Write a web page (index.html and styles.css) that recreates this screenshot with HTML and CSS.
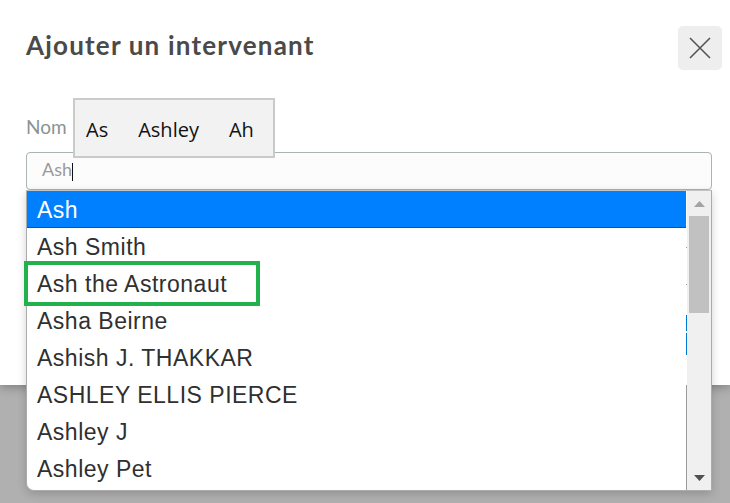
FILE: index.html
```html
<!DOCTYPE html>
<html lang="fr">
<head>
<meta charset="utf-8">
<title>Ajouter un intervenant</title>
<link rel="stylesheet" href="styles.css">
</head>
<body>
<div class="modal">
  <div class="header">
    <h2 class="title">Ajouter un intervenant</h2>
    <button class="close" aria-label="Fermer">
      <svg width="22" height="22" viewBox="0 0 22 22"><path d="M1 1 L21 21 M21 1 L1 21" stroke="#555" stroke-width="1.6" fill="none"/></svg>
    </button>
  </div>
  <div class="form">
    <label class="label">Nom</label>
    <div class="field">
      <div class="input"><span class="value">Ash</span><span class="caret"></span></div>
      <div class="ime">
        <span class="cand">As</span>
        <span class="cand">Ashley</span>
        <span class="cand">Ah</span>
      </div>
      <div class="dropdown">
        <ul class="list">
          <li class="item selected">Ash</li>
          <li class="item">Ash Smith</li>
          <li class="item">Ash the Astronaut</li>
          <li class="item">Asha Beirne</li>
          <li class="item">Ashish J. THAKKAR</li>
          <li class="item">ASHLEY ELLIS PIERCE</li>
          <li class="item">Ashley J</li>
          <li class="item">Ashley Pet</li>
        </ul>
        <div class="gap"></div>
        <div class="scrollbar">
          <div class="sb-btn sb-up"><svg width="11" height="6" viewBox="0 0 11 6"><polygon points="0,6 5.5,0 11,6" fill="#a3a3a3"/></svg></div>
          <div class="thumb"></div>
          <div class="sb-track"></div>
          <div class="sb-btn sb-down"><svg width="11" height="6" viewBox="0 0 11 6"><polygon points="0,0 11,0 5.5,6" fill="#505050"/></svg></div>
        </div>
      </div>
      <div class="highlight"></div>
    </div>
  </div>
</div>
</body>
</html>
```

FILE: styles.css
```css
html, body {
  margin: 0;
  padding: 0;
}
body {
  width: 730px;
  height: 503px;
  overflow: hidden;
  background: #b0b0b0;
}
.modal {
  background: #fff;
  height: 385px;
  box-sizing: border-box;
  box-shadow: 0 2px 10px rgba(0, 0, 0, 0.3);
  position: relative;
}
.header {
  display: flex;
  justify-content: space-between;
  align-items: flex-start;
  padding: 26px 8px 0 26px;
}
.title {
  margin: 4px 0 0 0;
  font-family: Lato, "Liberation Sans", sans-serif;
  font-weight: 700;
  font-size: 26px;
  letter-spacing: 1.2px;
  line-height: 30px;
  color: #4a4a4a;
}
.close {
  width: 44px;
  height: 44px;
  border: none;
  border-radius: 5px;
  background: #eeeeee;
  display: flex;
  align-items: center;
  justify-content: center;
  padding: 0;
}
.form {
  padding: 0 18px 0 26px;
}
.label {
  display: block;
  margin-top: 45px;
  font-family: Lato, "Liberation Sans", sans-serif;
  font-size: 19px;
  line-height: 23px;
  color: #879494;
}
.field {
  position: relative;
  margin-top: 14px;
}
.input {
  height: 38px;
  box-sizing: border-box;
  border: 1px solid #aab4b4;
  border-radius: 4px;
  background: #fcfcfc;
  padding: 0 15px 4px;
  font-family: Lato, "Liberation Sans", sans-serif;
  font-size: 18px;
  line-height: 32px;
  color: #9a9a9a;
}
.caret {
  display: inline-block;
  width: 1px;
  height: 18px;
  background: #111;
  vertical-align: -5px;
}
.ime {
  position: absolute;
  left: 47px;
  top: -54px;
  width: 202px;
  height: 60px;
  box-sizing: border-box;
  border: 2px solid #cacaca;
  background: #f2f2f2;
  display: flex;
  align-items: center;
  gap: 30px;
  padding: 3px 0 0 11px;
  font-family: "Open Sans", "Noto Sans", sans-serif;
  font-size: 20px;
  color: #111;
}
.dropdown {
  position: absolute;
  left: 0;
  top: 38px;
  width: 686px;
  height: 301px;
  box-sizing: border-box;
  border: 1px solid #ababab;
  border-top-color: #c4c4c4;
  border-radius: 0 0 0 8px;
  display: flex;
  box-shadow: 0 3px 10px rgba(0, 0, 0, 0.18);
  overflow: hidden;
}
.list {
  list-style: none;
  margin: 0;
  padding: 0;
  width: 659px;
  background: #fff;
  overflow: hidden;
}
.item {
  height: 36px;
  padding-top: 1px;
  line-height: 37px;
  padding-left: 10px;
  font-family: "Liberation Sans", Arial, sans-serif;
  font-size: 23px;
  letter-spacing: 0.5px;
  color: #303030;
  white-space: nowrap;
}
.item.selected {
  background: #0080ff;
  color: #fff;
  box-shadow: inset 0 -1px 0 #0050e0;
}
.gap {
  width: 1px;
  background: linear-gradient(to bottom,
    #fff 0, #fff 56px, #999 56px, #999 57px, #fff 57px,
    #fff 93px, #999 93px, #999 94px, #fff 94px,
    #fff 124px, #0078d4 124px, #0078d4 140px, #fff 140px,
    #fff 142px, #0078d4 142px, #0078d4 164px, #fff 164px,
    #fff 194px, #9c9c9c 194px);
}
.scrollbar {
  width: 24px;
  background: #f0f0f0;
  display: flex;
  flex-direction: column;
  align-items: center;
}
.sb-btn {
  height: 24px;
  width: 100%;
  display: flex;
  align-items: center;
  justify-content: center;
}
.sb-up {
  height: 25px;
}
.thumb {
  width: 20px;
  height: 97px;
  background: #c1c1c1;
}
.sb-track {
  flex: 1;
}
.highlight {
  position: absolute;
  left: -2px;
  top: 109px;
  width: 236px;
  height: 45px;
  box-sizing: border-box;
  border: 4px solid #22b14c;
}
```
